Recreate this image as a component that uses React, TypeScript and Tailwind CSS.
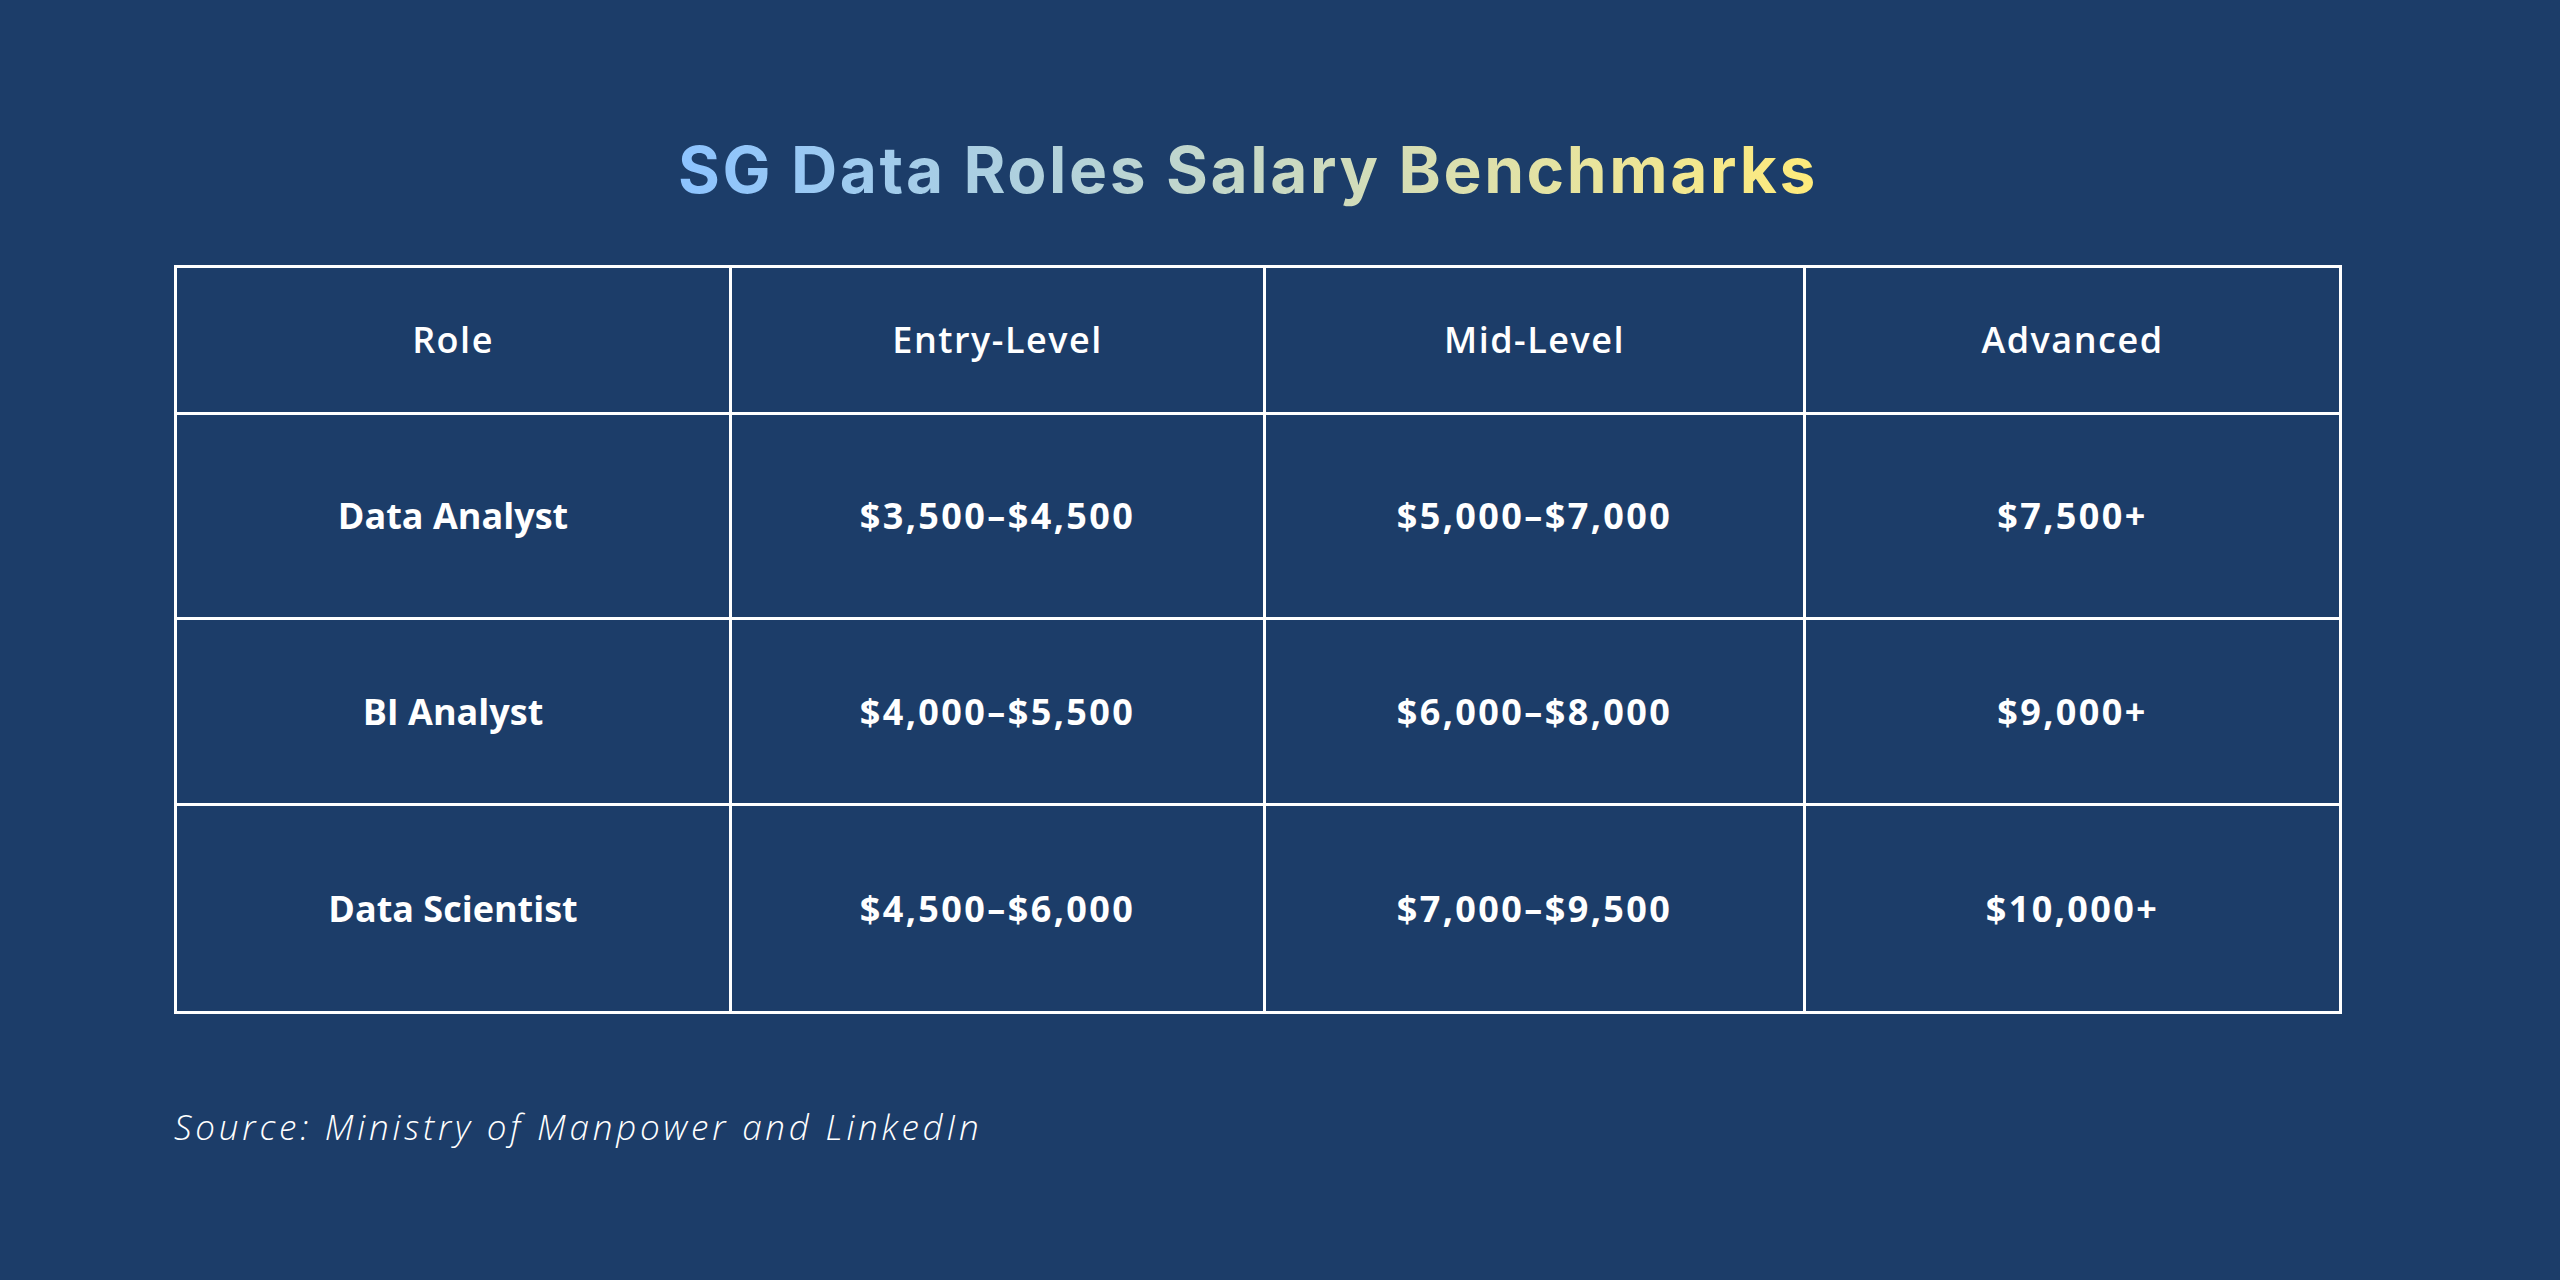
import React from "react";

const headers = ["Role", "Entry-Level", "Mid-Level", "Advanced"];

const rows = [
  ["Data Analyst", "$3,500–$4,500", "$5,000–$7,000", "$7,500+"],
  ["BI Analyst", "$4,000–$5,500", "$6,000–$8,000", "$9,000+"],
  ["Data Scientist", "$4,500–$6,000", "$7,000–$9,500", "$10,000+"],
];

const App = () => {
  return (
    <div className="w-[2560px] h-[1280px] bg-[#1c3d69] pl-[174px] pt-[130px] overflow-hidden">
      <div className="w-[2168px] flex flex-col">
        {/* タイトル */}
        <div className="flex justify-center pr-[20px]">
          <h1 className="font-['Inter',sans-serif] font-bold text-[64px] leading-[80px] tracking-[2.6px] bg-gradient-to-r from-[#8cc3ff] via-[#c6d8c6] to-[#ffeb7a] bg-clip-text text-transparent">
            SG Data Roles Salary Benchmarks
          </h1>
        </div>

        {/* 給与表 */}
        <div className="mt-[55px] bg-white p-[3px] grid grid-cols-[552px_531px_537px_533px] grid-rows-[144px_202px_183px_205px] gap-[3px] font-['Open_Sans',sans-serif] text-white text-[36px]">
          {headers.map((h) => (
            <div key={h} className="bg-[#1c3d69] flex items-center justify-center font-semibold tracking-[1.5px]">
              {h}
            </div>
          ))}
          {rows.map((row) =>
            row.map((cell, idx) => (
              <div
                key={row[0] + idx}
                className={
                  idx === 0
                    ? "bg-[#1c3d69] flex items-center justify-center font-bold"
                    : "bg-[#1c3d69] flex items-center justify-center font-bold tracking-[2.4px]"
                }
              >
                {cell}
              </div>
            ))
          )}
        </div>

        {/* 出典 */}
        <p className="mt-[93px] font-['Open_Sans',sans-serif] italic font-light text-white text-[35px] leading-[40px] tracking-[3.8px]">
          Source: Ministry of Manpower and LinkedIn
        </p>
      </div>
    </div>
  );
};

export default App;
